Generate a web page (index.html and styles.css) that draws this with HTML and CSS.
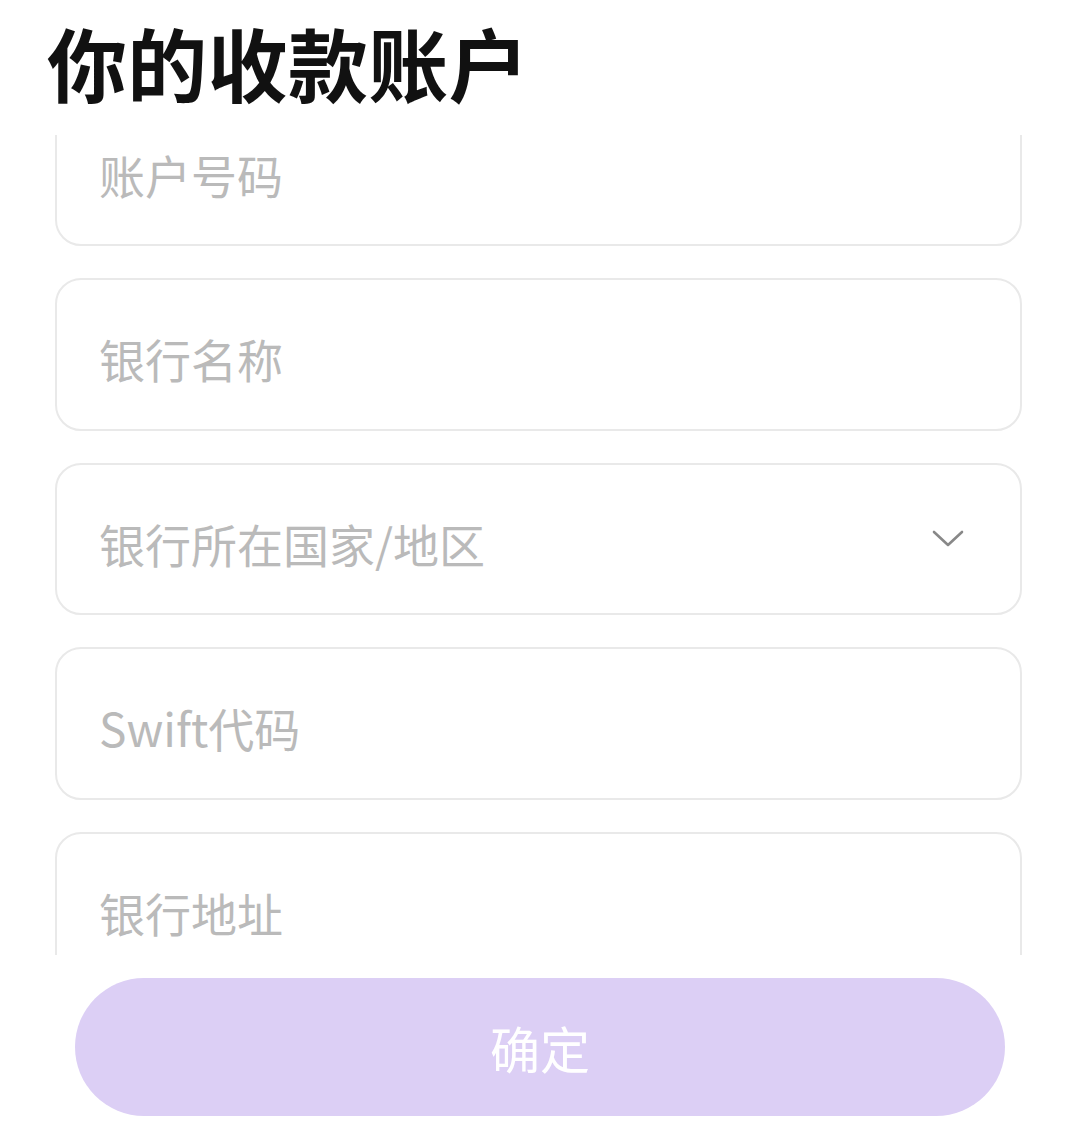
FILE: index.html
```html
<!DOCTYPE html>
<html lang="zh-CN">
<head>
<meta charset="utf-8">
<title>你的收款账户</title>
<link rel="stylesheet" href="styles.css">
</head>
<body>
<div class="page">
  <h1 class="title">你的收款账户</h1>
  <div class="scroll">
    <div class="list">
      <div class="field"><span class="ph">账户号码</span></div>
      <div class="field"><span class="ph">银行名称</span></div>
      <div class="field select"><span class="ph">银行所在国家/地区</span>
        <svg class="chev" width="32" height="18" viewBox="0 0 32 18"><path d="M2 2 L16 15 L30 2" fill="none" stroke="#888" stroke-width="2.6" stroke-linecap="round" stroke-linejoin="round"/></svg>
      </div>
      <div class="field"><span class="ph">Swift代码</span></div>
      <div class="field"><span class="ph">银行地址</span></div>
    </div>
  </div>
  <div class="footer">
    <button class="confirm">确定</button>
  </div>
</div>
</body>
</html>
```

FILE: styles.css
```css
* { box-sizing: border-box; }
html, body { margin: 0; padding: 0; background: #fff; }
body { font-family: "Noto Sans CJK SC", "Noto Sans", sans-serif; }
.page { width: 1080px; height: 1129px; overflow: hidden; }
.title {
  margin: 0;
  padding: 15px 0 0 47px;
  height: 135px;
  font-size: 80px;
  line-height: 92px;
  font-weight: 700;
  color: #111;
  letter-spacing: 0.3px;
}
.scroll {
  height: 820px;
  overflow: hidden;
  padding: 0 58px 0 55px;
}
.list {
  margin-top: -41.5px;
  display: flex;
  flex-direction: column;
  gap: 32px;
}
.field {
  height: 152.5px;
  border: 2.5px solid #e9e9e9;
  border-radius: 26px;
  display: flex;
  align-items: center;
  padding: 8px 0 0 42px;
}
.ph {
  font-size: 46px;
  color: #bababa;
  line-height: 1;
}
.select { justify-content: space-between; padding-right: 56px; }
.chev { display: block; margin-top: -8px; }
.footer { padding: 23px 75px 0 75px; }
.confirm {
  width: 100%;
  height: 138px;
  border: none;
  border-radius: 69px;
  background: #dccff5;
  color: #fff;
  font-family: "Noto Sans CJK SC", sans-serif;
  font-size: 50px;
  padding: 0;
}
```
